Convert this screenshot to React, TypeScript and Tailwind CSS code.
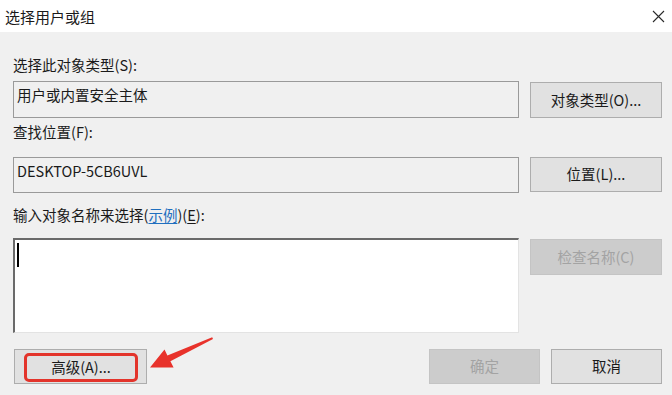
import React from "react";

const font = { fontFamily: '"Noto Sans CJK SC", "Noto Sans", sans-serif' };

export default function App() {
  return (
    <div
      className="relative w-[672px] h-[395px] overflow-hidden bg-[#f0f0f0] text-[#1a1a1a]"
      style={font}
    >
      {/* title bar */}
      <div className="h-[32px] bg-white flex items-center justify-between pl-[5px] pr-[7px]">
        <span className="text-[15px] leading-none text-[#1a1a1a]">选择用户或组</span>
        <svg width="13" height="13" viewBox="0 0 13 13">
          <path d="M1 1 L12 12 M12 1 L1 12" stroke="#2a2a2a" strokeWidth="1.1" fill="none" />
        </svg>
      </div>

      <div className="pl-[13px] pr-[10px] flex flex-col text-[14.5px]">
        <div className="mt-[23px] h-[20px] leading-[20px]">选择此对象类型(S):</div>
        <div className="mt-[6px] flex gap-[11px] items-start">
          <div className="flex-1 h-[37px] border border-[#9a9a9a] bg-[#f0f0f0] pl-[3px] pt-[3px] leading-[20px]">
            用户或内置安全主体
          </div>
          <button className="mt-[1px] w-[132px] h-[36px] border border-[#adadad] bg-[#e1e1e1] flex items-center justify-center leading-none">
            对象类型(O)...
          </button>
        </div>

        <div className="mt-[4px] h-[20px] leading-[20px]">查找位置(F):</div>
        <div className="mt-[15px] flex gap-[11px] items-start">
          <div className="flex-1 h-[36px] border border-[#9a9a9a] bg-[#f0f0f0] pl-[3px] pt-[3px] leading-[20px]">
            DESKTOP-5CB6UVL
          </div>
          <button className="w-[132px] h-[35px] border border-[#adadad] bg-[#e1e1e1] flex items-center justify-center leading-none">
            位置(L)...
          </button>
        </div>

        <div className="mt-[12px] h-[20px] leading-[20px]">
          输入对象名称来选择(
          <span className="text-[#1f6fbf] underline underline-offset-2">示例</span>)(
          <span className="underline underline-offset-2">E</span>):
        </div>
        <div className="mt-[13px] flex gap-[11px] items-start">
          <div className="flex-1 h-[95px] bg-white border-t-2 border-l-2 border-t-[#6a6a6a] border-l-[#6a6a6a] border-r border-b border-r-[#e3e3e3] border-b-[#e3e3e3] pl-[2px] pt-[3px]">
            <div className="w-[2px] h-[24px] bg-black" />
          </div>
          <button className="mt-[1px] w-[132px] h-[36px] border border-[#c4c4c4] bg-[#cccccc] text-[#a3a3a3] flex items-center justify-center leading-none">
            检查名称(C)
          </button>
        </div>

        <div className="mt-[16px] flex items-start">
          <button className="ml-[1px] w-[133px] h-[35px] border border-[#adadad] bg-[#e1e1e1] p-[3px] pl-[9px] pr-[8px] pb-[1px]">
            <div className="w-full h-full border-[3px] border-[#e3342b] rounded-[5px] flex items-center justify-center leading-none">
              高级(A)...
            </div>
          </button>
          <div className="flex-1" />
          <button className="w-[111px] h-[35px] border border-[#c4c4c4] bg-[#cccccc] text-[#a3a3a3] flex items-center justify-center leading-none">
            确定
          </button>
          <button className="ml-[11px] w-[111px] h-[35px] border border-[#adadad] bg-[#e1e1e1] flex items-center justify-center leading-none">
            取消
          </button>
        </div>
      </div>

      {/* red arrow annotation */}
      <svg
        className="absolute left-0 top-0 pointer-events-none"
        width="672"
        height="395"
        viewBox="0 0 672 395"
      >
        <polygon
          points="150,367.5 164.5,349.5 167.4,355.4 212.2,337.3 213,339.1 170.4,361.2 173.6,367.6"
          fill="#e8322b"
        />
      </svg>
    </div>
  );
}
